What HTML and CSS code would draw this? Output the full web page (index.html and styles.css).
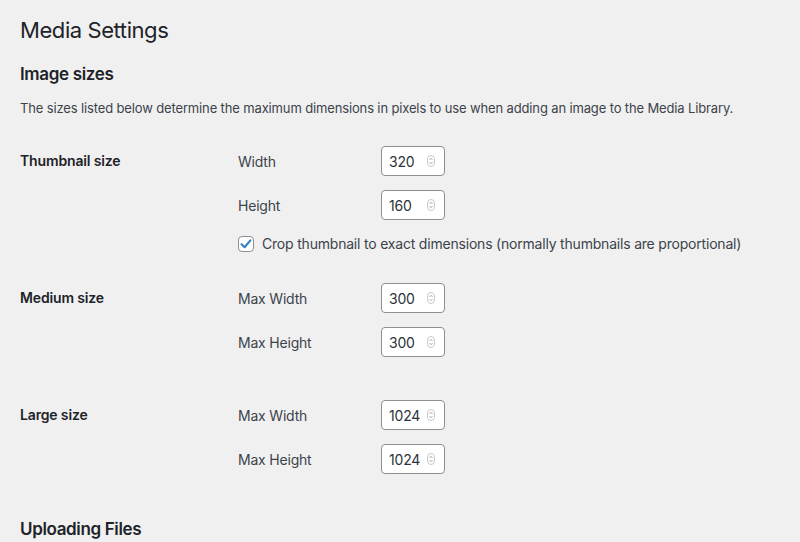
FILE: index.html
```html
<!DOCTYPE html>
<html lang="en">
<head>
<meta charset="utf-8">
<title>Media Settings</title>
<link rel="stylesheet" href="styles.css">
</head>
<body>
<div class="wrap">
  <h1 class="title">Media Settings</h1>
  <h2 class="section-title">Image sizes</h2>
  <p class="intro">The sizes listed below determine the maximum dimensions in pixels to use when adding an image to the Media Library.</p>

  <div class="setting setting-thumb">
    <div class="setting-label">Thumbnail size</div>
    <div class="fields">
      <div class="field"><span class="field-label">Width</span><span class="num"><span class="num-value">320</span><svg class="spin" viewBox="0 0 8 12" width="8" height="12"><rect x="0.5" y="0.5" width="7" height="11" rx="3.5" fill="none" stroke="#c8c9cc"/><path d="M2.6 4.8 L4 3.4 L5.4 4.8 M2.6 7.2 L4 8.6 L5.4 7.2" fill="none" stroke="#8c8f94" stroke-width="0.9"/></svg></span></div>
      <div class="field"><span class="field-label">Height</span><span class="num"><span class="num-value">160</span><svg class="spin" viewBox="0 0 8 12" width="8" height="12"><rect x="0.5" y="0.5" width="7" height="11" rx="3.5" fill="none" stroke="#c8c9cc"/><path d="M2.6 4.8 L4 3.4 L5.4 4.8 M2.6 7.2 L4 8.6 L5.4 7.2" fill="none" stroke="#8c8f94" stroke-width="0.9"/></svg></span></div>
      <label class="check-row"><span class="checkbox"><svg viewBox="0 0 16 16" width="16" height="16"><path d="M3.6 8.2 L6.6 11.2 L12.4 4.4" fill="none" stroke="#3582c4" stroke-width="2.2" stroke-linecap="round" stroke-linejoin="round"/></svg></span>Crop thumbnail to exact dimensions (normally thumbnails are proportional)</label>
    </div>
  </div>

  <div class="setting setting-medium">
    <div class="setting-label">Medium size</div>
    <div class="fields">
      <div class="field"><span class="field-label">Max Width</span><span class="num"><span class="num-value">300</span><svg class="spin" viewBox="0 0 8 12" width="8" height="12"><rect x="0.5" y="0.5" width="7" height="11" rx="3.5" fill="none" stroke="#c8c9cc"/><path d="M2.6 4.8 L4 3.4 L5.4 4.8 M2.6 7.2 L4 8.6 L5.4 7.2" fill="none" stroke="#8c8f94" stroke-width="0.9"/></svg></span></div>
      <div class="field"><span class="field-label">Max Height</span><span class="num"><span class="num-value">300</span><svg class="spin" viewBox="0 0 8 12" width="8" height="12"><rect x="0.5" y="0.5" width="7" height="11" rx="3.5" fill="none" stroke="#c8c9cc"/><path d="M2.6 4.8 L4 3.4 L5.4 4.8 M2.6 7.2 L4 8.6 L5.4 7.2" fill="none" stroke="#8c8f94" stroke-width="0.9"/></svg></span></div>
    </div>
  </div>

  <div class="setting setting-large">
    <div class="setting-label">Large size</div>
    <div class="fields">
      <div class="field"><span class="field-label">Max Width</span><span class="num"><span class="num-value">1024</span><svg class="spin" viewBox="0 0 8 12" width="8" height="12"><rect x="0.5" y="0.5" width="7" height="11" rx="3.5" fill="none" stroke="#c8c9cc"/><path d="M2.6 4.8 L4 3.4 L5.4 4.8 M2.6 7.2 L4 8.6 L5.4 7.2" fill="none" stroke="#8c8f94" stroke-width="0.9"/></svg></span></div>
      <div class="field"><span class="field-label">Max Height</span><span class="num"><span class="num-value">1024</span><svg class="spin" viewBox="0 0 8 12" width="8" height="12"><rect x="0.5" y="0.5" width="7" height="11" rx="3.5" fill="none" stroke="#c8c9cc"/><path d="M2.6 4.8 L4 3.4 L5.4 4.8 M2.6 7.2 L4 8.6 L5.4 7.2" fill="none" stroke="#8c8f94" stroke-width="0.9"/></svg></span></div>
    </div>
  </div>

  <h2 class="section-title upload-title">Uploading Files</h2>
</div>
</body>
</html>
```
FILE: styles.css
```css
html, body {
  margin: 0;
  padding: 0;
  background: #f0f0f1;
}
body {
  font-family: Inter, Roboto, "Liberation Sans", sans-serif;
  color: #3c434a;
  font-size: 14px;
  letter-spacing: -0.2px;
  overflow: hidden;
}
.wrap {
  padding: 0 0 0 20px;
  width: 780px;
}
.title {
  margin: 0;
  padding-top: 16px;
  font-size: 22px;
  line-height: 29px;
  font-weight: 400;
  letter-spacing: -0.42px;
  color: #1d2327;
}
.section-title {
  margin: 0;
  font-size: 17px;
  line-height: 22px;
  font-weight: 600;
  letter-spacing: -0.35px;
  color: #1d2327;
}
.title + .section-title {
  margin-top: 18px;
}
.intro {
  margin: 0;
  margin-top: 13px;
  font-size: 13px;
  line-height: 20px;
  letter-spacing: -0.14px;
}
.setting {
  display: grid;
  grid-template-columns: 218px 1fr;
  align-items: start;
}
.setting-thumb { margin-top: 28px; }
.setting-medium { margin-top: 31px; }
.setting-large { margin-top: 43px; }
.setting-label {
  font-weight: 600;
  color: #1d2327;
  line-height: 30px;
  letter-spacing: -0.15px;
}
.fields {
  display: flex;
  flex-direction: column;
  gap: 14px;
}
.field {
  display: flex;
  align-items: center;
  height: 30px;
}
.field-label {
  width: 143px;
  color: #3c434a;
}
.num {
  box-sizing: border-box;
  width: 64px;
  height: 30px;
  border: 1px solid #8c8f94;
  border-radius: 4px;
  background: #fff;
  display: flex;
  align-items: center;
  justify-content: space-between;
  padding: 0 9px 0 7px;
  color: #2c3338;
}
.spin { display: block; flex: none; }
.check-row {
  display: flex;
  align-items: center;
  gap: 8px;
  margin-top: 2px;
  line-height: 16px;
}
.checkbox {
  box-sizing: border-box;
  width: 16px;
  height: 16px;
  border: 1px solid #8c8f94;
  border-radius: 4px;
  background: #fff;
  display: flex;
  align-items: center;
  justify-content: center;
  flex: none;
}
.checkbox svg { display: block; margin: -1px; }
.upload-title {
  margin-top: 44px;
}
```
